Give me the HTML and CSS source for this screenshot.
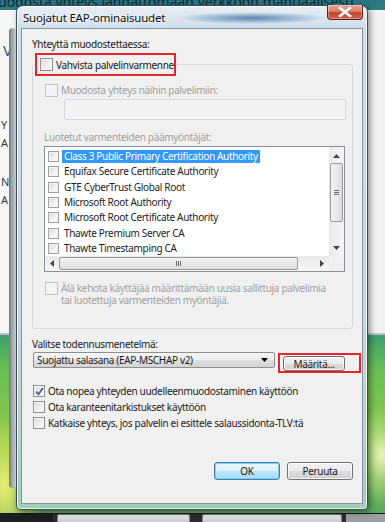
FILE: index.html
```html
<!DOCTYPE html>
<html lang="fi">
<head>
<meta charset="utf-8">
<title>Suojatut EAP-ominaisuudet</title>
<link rel="stylesheet" href="styles.css">
</head>
<body>
<div class="desktop">
  <div class="wizard">
    <div class="wizard-title">uodosta yhteys langattomaan verkkoon manuaalisesti</div>
    <div class="wizard-body">
      <div class="wizard-edge"></div>
      <div class="wizard-letters">
        <span class="wl wl-v">V</span>
        <span class="wl wl-y">Y</span>
        <span class="wl wl-a1">A</span>
        <span class="wl wl-n">N</span>
        <span class="wl wl-a2">A</span>
      </div>
    </div>
    <div class="wallpaper"></div>
  </div>
  <div class="taskbar">
    <span class="tb tb-start"></span>
    <span class="tb tb-btn tb-btn1"></span>
    <span class="tb tb-btn tb-btn2"></span>
    <span class="tb tb-rest"></span>
  </div>

  <div class="dialog">
    <div class="titlebar">
      <span class="title">Suojatut EAP-ominaisuudet</span>
      <span class="close">
        <svg width="14" height="10" viewBox="0 0 14 10"><path d="M2 1 L12 9 M12 1 L2 9" stroke="#fff" stroke-width="2.6" stroke-linecap="square" fill="none"/></svg>
      </span>
    </div>
    <div class="client">
      <div class="label">Yhteyttä muodostettaessa:</div>
      <fieldset class="group">
        <legend class="legend"><span class="redbox"><span class="cb"></span><span>Vahvista palvelinvarmenne</span></span></legend>
        <div class="row row-servers disabled"><span class="cb cb-dis"></span><span>Muodosta yhteys näihin palvelimiin:</span></div>
        <div class="textfield"></div>
        <div class="sublabel disabled">Luotetut varmenteiden päämyöntäjät:</div>
        <div class="listbox">
          <div class="list-main">
            <ul class="items">
              <li class="item"><span class="cb cb-sm"></span><span class="it sel">Class 3 Public Primary Certification Authority</span></li>
              <li class="item"><span class="cb cb-sm"></span><span class="it">Equifax Secure Certificate Authority</span></li>
              <li class="item"><span class="cb cb-sm"></span><span class="it">GTE CyberTrust Global Root</span></li>
              <li class="item"><span class="cb cb-sm"></span><span class="it">Microsoft Root Authority</span></li>
              <li class="item"><span class="cb cb-sm"></span><span class="it">Microsoft Root Certificate Authority</span></li>
              <li class="item"><span class="cb cb-sm"></span><span class="it">Thawte Premium Server CA</span></li>
              <li class="item"><span class="cb cb-sm"></span><span class="it">Thawte Timestamping CA</span></li>
            </ul>
            <div class="vscroll">
              <span class="arrow">
                <svg width="7" height="4" viewBox="0 0 7 4"><path d="M0 4 L3.5 0 L7 4 Z" fill="#444"/></svg>
              </span>
              <span class="vthumb"><span class="grip-h"></span><span class="grip-h"></span><span class="grip-h"></span></span>
              <span class="vspace"></span>
              <span class="arrow">
                <svg width="7" height="4" viewBox="0 0 7 4"><path d="M0 0 L3.5 4 L7 0 Z" fill="#444"/></svg>
              </span>
            </div>
          </div>
          <div class="hscroll">
            <span class="harrow">
              <svg width="4" height="7" viewBox="0 0 4 7"><path d="M4 0 L0 3.5 L4 7 Z" fill="#444"/></svg>
            </span>
            <span class="hthumb"><span class="grip-v"></span><span class="grip-v"></span><span class="grip-v"></span></span>
            <span class="hspace"></span>
            <span class="harrow">
              <svg width="4" height="7" viewBox="0 0 4 7"><path d="M0 0 L4 3.5 L0 7 Z" fill="#444"/></svg>
            </span>
            <span class="corner"></span>
          </div>
        </div>
        <div class="row row-prompt disabled"><span class="cb cb-dis"></span><span class="prompt-text"><span class="pl">Älä kehota käyttäjää määrittämään uusia sallittuja palvelimia</span><span class="pl">tai luotettuja varmenteiden myöntäjiä.</span></span></div>
      </fieldset>

      <div class="label label-method">Valitse todennusmenetelmä:</div>
      <div class="method-row">
        <div class="combo"><span>Suojattu salasana (EAP-MSCHAP v2)</span>
          <svg width="7" height="4" viewBox="0 0 7 4"><path d="M0 0 L7 0 L3.5 4 Z" fill="#000"/></svg>
        </div>
        <div class="redbox2"><span class="btn btn-conf">Määritä...</span></div>
      </div>
      <div class="opts">
        <div class="row opt"><span class="cb cb-on">
          <svg width="9" height="9" viewBox="0 0 9 9"><path d="M1.2 4.6 L3.5 7.4 L7.8 1" stroke="#3b5aa8" stroke-width="1.7" fill="none"/></svg>
        </span><span>Ota nopea yhteyden uudelleenmuodostaminen käyttöön</span></div>
        <div class="row opt"><span class="cb"></span><span>Ota karanteenitarkistukset käyttöön</span></div>
        <div class="row opt"><span class="cb"></span><span>Katkaise yhteys, jos palvelin ei esittele salaussidonta-TLV:tä</span></div>
      </div>
      <div class="buttons">
        <span class="btn btn-ok">OK</span>
        <span class="btn btn-cancel">Peruuta</span>
      </div>
    </div>
  </div>
</div>
</body>
</html>
```

FILE: styles.css
```css
* { box-sizing: border-box; }
html, body { margin: 0; padding: 0; }
body {
  width: 385px;
  height: 522px;
  overflow: hidden;
  font-family: "Noto Sans", "Open Sans", sans-serif;
  font-size: 10px;
  letter-spacing: -0.33px;
  color: #1b1b1b;
}
.desktop {
  position: relative;
  width: 385px;
  height: 522px;
  overflow: hidden;
  background: #f3f3f3;
}

/* background wizard window */
.wizard {
  display: flex;
  flex-direction: column;
  height: 514px;
}
.wizard-title {
  height: 10px;
  flex: none;
  background: linear-gradient(#2a7583, #2f7d86);
  color: #0d2b33;
  font-size: 14px;
  line-height: 3px;
  white-space: nowrap;
  overflow: hidden;
  text-indent: -2px;
  letter-spacing: 0;
}
.wizard-body {
  position: relative;
  height: 325px;
  flex: none;
  background: linear-gradient(90deg, #f7f7f7 0, #f2f2f2 100%);
  border-bottom: 2px solid #bfc3c6;
}
.wizard-edge {
  position: absolute;
  left: 9px;
  top: 18px;
  width: 7px;
  height: 460px;
  border-radius: 4px;
  background: linear-gradient(90deg, #6f7478, #9ea4a8 40%, #c7cbce);
  z-index: 1;
}
.wl {
  position: absolute;
  left: 1px;
  font-size: 11px;
  color: #3a3a3a;
  line-height: 11px;
}
.wl-v { top: 33px; left: 3px; color: #2a5a8f; font-size: 15px; line-height: 15px; }
.wl-y { top: 109px; }
.wl-a1 { top: 127px; }
.wl-n { top: 166px; }
.wl-a2 { top: 184px; }
.wallpaper {
  flex: 1;
  background:
    radial-gradient(ellipse 40px 70px at 4px 150px, #e8ef7a 0, rgba(220,230,90,0.6) 50%, rgba(0,0,0,0) 100%),
    radial-gradient(ellipse 30px 50px at 382px 120px, #e9f4b8 0, rgba(200,230,150,0.5) 50%, rgba(0,0,0,0) 100%),
    linear-gradient(180deg, #3f9e6e 0, #6cbf55 20%, #8ac84a 60%, #5aa860 100%);
}

.taskbar {
  position: absolute;
  left: 0;
  top: 513px;
  width: 385px;
  height: 9px;
  display: flex;
  gap: 4px;
  background: #2a2d2f;
  border-top: 1px solid #15181a;
}
.tb { display: block; height: 100%; }
.tb-start { width: 53px; background: #1c1e20; }
.tb-btn { border: 1px solid #7d8286; border-bottom: none; border-radius: 2px 2px 0 0; background: linear-gradient(#e4e6e8, #c9cdd0); }
.tb-btn1 { width: 133px; }
.tb-btn2 { width: 140px; margin-left: 8px; }
.tb-rest { flex: 1; background: #9a9fa3; }

/* dialog window */
.dialog {
  position: absolute;
  left: 16px;
  top: 5px;
  width: 352px;
  height: 505px;
  border: 1px solid #3d4d5c;
  border-radius: 7px 7px 4px 4px;
  background:
    radial-gradient(ellipse 75px 6px at 235px 12px, rgba(60,110,165,0.8) 0, rgba(60,110,165,0) 100%),
    linear-gradient(180deg, #e9f0f6 0, #cfdde9 22px, #c6d6e2 300px, #b7d3c6 420px, #9fceb8 100%);
  box-shadow: 2px 2px 6px rgba(0,0,0,0.45), inset 0 0 0 1px rgba(255,255,255,0.75);
  display: flex;
  flex-direction: column;
  padding: 0 4px 5px 4px;
}
.titlebar {
  height: 22px;
  flex: none;
  display: flex;
  align-items: center;
  justify-content: space-between;
}
.title {
  padding-left: 2px;
  font-size: 11.5px;
  letter-spacing: -0.2px;
  color: #101010;
  text-shadow: 0 0 6px #fff, 0 0 3px #fff;
  margin-top: 1px;
}
.close {
  align-self: flex-start;
  width: 36px;
  height: 15px;
  margin-top: -1px;
  border: 1px solid #5b1e16;
  border-top: none;
  border-radius: 0 0 4px 4px;
  background: linear-gradient(180deg, #e7a394 0, #d8826f 45%, #c2452b 55%, #d0624a 100%);
  box-shadow: inset 0 0 0 1px rgba(255,255,255,0.35);
  display: flex;
  align-items: center;
  justify-content: center;
}
.client {
  flex: 1;
  background: #f0f0f0;
  border: 1px solid #8796a6;
  padding: 8px 9px 0 10px;
  display: flex;
  flex-direction: column;
}
.label { line-height: 15px; height: 15px; }
.disabled { color: #a1a1a1; }

.group {
  margin: 1px 0 0 0;
  padding: 0 0 0 2px;
  border: 1px solid #d6dadf;
  border-radius: 3px;
  min-width: 0;
  height: 276px;
}
.legend { padding: 0; margin: 0; }
.redbox {
  display: flex;
  align-items: center;
  gap: 3px;
  height: 23px;
  width: 141px;
  border: 2px solid #e1262c;
  padding-left: 3px;
  white-space: nowrap;
}
.cb {
  flex: none;
  width: 13px;
  height: 13px;
  border: 1px solid #8e8f8f;
  background: linear-gradient(135deg, #d6d6d6 0, #f1f1f1 55%, #ffffff 100%);
  box-shadow: inset 0 0 0 1px #f4f4f4;
  display: inline-flex;
  align-items: center;
  justify-content: center;
}
.cb-dis { border-color: #c4c4c4; background: #f4f4f4; box-shadow: none; }
.cb-sm { width: 11px; height: 11px; border-color: #a0a0a0; }
.row { display: flex; align-items: flex-start; gap: 3px; line-height: 12px; white-space: nowrap; }
.row-servers { margin: 8px 0 0 10px; line-height: 13px; }
.textfield {
  margin: 2px 0 0 29px;
  width: 282px;
  height: 21px;
  border: 1px solid #d5d9dd;
  border-radius: 2px;
  background: #f3f3f3;
}
.sublabel { margin: 10px 0 0 9px; line-height: 15px; }
.listbox {
  margin: 1px 0 0 9px;
  width: 301px;
  height: 126px;
  border: 1px solid #8d9197;
  background: #ffffff;
  display: flex;
  flex-direction: column;
}
.list-main { flex: 1; display: flex; min-height: 0; }
.items {
  flex: 1;
  list-style: none;
  margin: 0;
  padding: 2px 0 0 3px;
}
.item {
  display: flex;
  align-items: center;
  gap: 3px;
  height: 15.3px;
  color: #1e1e1e;
  white-space: nowrap;
}
.it { padding: 0 2px; line-height: 13px; }
.sel { background: #3399ff; color: #fff; }
.vscroll {
  width: 15px;
  flex: none;
  background: linear-gradient(90deg, #e9e9e9, #f6f6f6);
  display: flex;
  flex-direction: column;
  align-items: center;
  padding: 1px 0;
}
.arrow { height: 15px; display: flex; align-items: center; justify-content: center; }
.vthumb {
  width: 13px;
  height: 59px;
  border: 1px solid #9b9b9b;
  border-radius: 2px;
  background: linear-gradient(90deg, #f2f2f2 0, #e9e9e9 50%, #d9d9d9 100%);
  display: flex;
  flex-direction: column;
  align-items: center;
  justify-content: center;
  gap: 1px;
}
.grip-h { width: 5px; height: 1px; background: #6a6a6a; }
.vspace { flex: 1; }
.hscroll {
  height: 15px;
  flex: none;
  background: linear-gradient(#e9e9e9, #f6f6f6);
  display: flex;
  align-items: center;
}
.harrow { width: 14px; height: 15px; display: flex; align-items: center; justify-content: center; }
.hthumb {
  width: 239px;
  height: 13px;
  border: 1px solid #9b9b9b;
  border-radius: 2px;
  background: linear-gradient(#f2f2f2 0, #e9e9e9 50%, #d9d9d9 100%);
  display: flex;
  align-items: center;
  justify-content: center;
  gap: 1px;
}
.grip-v { width: 1px; height: 5px; background: #6a6a6a; }
.hspace { flex: 1; }
.corner { width: 15px; height: 15px; background: #f0f0f0; }
.row-prompt { margin: 10px 0 0 10px; }
.prompt-text { display: flex; flex-direction: column; }
.pl { display: block; height: 12px; line-height: 12px; }

.label-method { margin-top: 8px; }
.method-row {
  display: flex;
  align-items: flex-start;
  height: 20px;
}
.combo {
  flex: none;
  margin-left: 1px;
  width: 242px;
  height: 16px;
  border: 1px solid #8e8f8f;
  border-radius: 2px;
  background: linear-gradient(#f6f6f6 0, #ececec 50%, #dedede 51%, #d4d4d4 100%);
  display: flex;
  align-items: center;
  justify-content: space-between;
  padding: 0 6px 0 3px;
  line-height: 14px;
  white-space: nowrap;
}
.redbox2 {
  flex: none;
  margin-left: 3px;
  width: 83px;
  height: 20px;
  margin-top: 1px;
  border: 2px solid #e1262c;
  padding: 1px 0 0 3px;
}
.btn {
  display: flex;
  align-items: center;
  justify-content: center;
  border: 1px solid #707070;
  border-radius: 3px;
  background: linear-gradient(#f2f2f2 0, #ebebeb 50%, #dddddd 51%, #cfcfcf 100%);
  box-shadow: inset 0 0 0 1px rgba(255,255,255,0.8);
  color: #1b1b1b;
}
.btn-conf { width: 62px; height: 15px; }
.opts { margin-top: 11px; display: flex; flex-direction: column; }
.opt { height: 16px; align-items: center; margin-left: 1px; }
.opt .cb { width: 12px; height: 12px; }
.cb-on { background: linear-gradient(135deg, #dcdcdc, #ffffff); }
.buttons {
  display: flex;
  justify-content: flex-end;
  gap: 7px;
  margin-top: 31px;
}
.btn-ok, .btn-cancel { width: 66px; height: 18px; }
.btn-ok {
  border-color: #3c7fb1;
  background: linear-gradient(#eaf6fd 0, #d9f0fc 50%, #bee6fd 51%, #a7d9f5 100%);
  box-shadow: inset 0 0 0 1px #7fd0f5;
}
```
